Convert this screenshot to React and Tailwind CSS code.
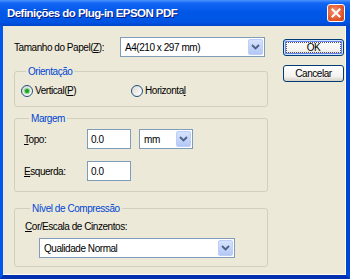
import React from "react";

const font = { fontFamily: "'Liberation Sans', Arial, sans-serif" };

function Chevron() {
  return (
    <svg width="9" height="6" viewBox="0 0 9 6">
      <path d="M1 1 L4.5 4.5 L8 1" fill="none" stroke="#4d6185" strokeWidth="1.8" />
    </svg>
  );
}

function Combo({ value, className }) {
  return (
    <div className={"flex h-[20px] items-stretch border border-[#7f9db9] bg-white p-px " + className}>
      <div className="flex flex-1 items-center pl-[3px] text-black">{value}</div>
      <div className="flex w-[15px] items-center justify-center rounded-[2px] border border-[#bccef8] bg-[linear-gradient(to_bottom,#d6e3fd,#b4c8f6)]">
        <Chevron />
      </div>
    </div>
  );
}

function Input({ value }) {
  return (
    <div className="flex h-[20px] w-[44px] items-center border border-[#7f9db9] bg-white pl-[3px]">
      {value}
    </div>
  );
}

function Radio({ checked }) {
  return (
    <div className="flex h-[12px] w-[12px] items-center justify-center rounded-full border border-[#1c5180] bg-[linear-gradient(135deg,#dcd9d0,#ffffff)]">
      {checked && <div className="h-[4px] w-[4px] rounded-full bg-[#21a121] shadow-[0_0_1px_1px_#7fcf7f]" />}
    </div>
  );
}

function Group({ title, children, className }) {
  return (
    <fieldset className={"rounded-[3px] border border-[#d0d0bf] " + className}>
      <legend className="ml-[5px] px-[2px] leading-[13px] text-[#0046d5]">{title}</legend>
      {children}
    </fieldset>
  );
}

function Button({ children, def }) {
  return (
    <div
      className={
        "flex h-[17px] w-[61px] items-center justify-center rounded-[3px] border border-[#003c74] bg-[linear-gradient(to_bottom,#ffffff,#f3f2ee_70%,#d6d0c5)] " +
        (def ? "shadow-[inset_0_0_0_1px_#cee7ff,inset_0_0_0_2px_#6982ee]" : "")
      }
    >
      {def ? (
        <span className="flex h-[11px] w-[55px] items-center justify-center border border-dotted border-[#555]">{children}</span>
      ) : (
        children
      )}
    </div>
  );
}

export default function App() {
  return (
    <div
      className="flex h-[279px] w-[350px] flex-col overflow-hidden bg-[#0054e3] text-[10px] leading-[13px] tracking-[-0.45px] text-black"
      style={font}
    >
      {/* Title bar */}
      <div className="flex h-[26px] items-center justify-between bg-[linear-gradient(to_bottom,#4a95ff_0%,#1466f5_12%,#0058e8_45%,#0054e3_85%,#0044cc_100%)] pl-[7px] pr-[5px]">
        <span className="text-[11.5px] font-bold leading-[15px] tracking-[-0.55px] text-white [text-shadow:1px_1px_#0a1883]">
          Definições do Plug-in EPSON PDF
        </span>
        <div className="flex h-[18px] w-[18px] items-center justify-center rounded-[3px] border border-white bg-[radial-gradient(circle_at_40%_40%,#f29470,#e05428_65%,#c8401a)]">
          <svg width="10" height="10" viewBox="0 0 10 10">
            <path d="M1.5 1.5 L8.5 8.5 M8.5 1.5 L1.5 8.5" stroke="#fff" strokeWidth="2" strokeLinecap="square" />
          </svg>
        </div>
      </div>
      {/* Client */}
      <div className="flex flex-1 border-b-[4px] border-l-[3px] border-r-[4px] border-b-[#0131b0] border-l-[#0058ee] border-r-[#0046d5]">
        <div className="flex flex-1 border-b border-r border-[#fffbf0] bg-[#ece9d8]">
          {/* Left column */}
          <div className="ml-[11px] flex w-[254px] flex-col pt-[11px]">
            <div className="flex h-[20px] items-center">
              <span className="w-[106px]">
                Tamanho do Papel(<u>Z</u>):
              </span>
              <Combo value="A4(210 x 297 mm)" className="w-[145px]" />
            </div>

            <Group title="Orientação" className="mt-[8px] pb-[9px] pl-[6px]">
              <div className="mt-[6px] flex h-[13px] items-center">
                <div className="flex w-[110px] items-center gap-[2px]">
                  <Radio checked />
                  <span>
                    Vertical(<u>P</u>)
                  </span>
                </div>
                <div className="flex items-center gap-[2px]">
                  <Radio />
                  <span>
                    Horizonta<u>l</u>
                  </span>
                </div>
              </div>
            </Group>

            <Group title="Margem" className="mt-[5px] pb-[10px] pl-[9px]">
              <div className="mt-[4px] flex h-[20px] items-center">
                <span className="w-[63px]">
                  <u>T</u>opo:
                </span>
                <Input value="0.0" />
                <Combo value="mm" className="ml-[8px] w-[54px]" />
              </div>
              <div className="mt-[12px] flex h-[20px] items-center">
                <span className="w-[63px]">
                  <u>E</u>squerda:
                </span>
                <Input value="0.0" />
              </div>
            </Group>

            <Group title="Nível de Compressão" className="mt-[10px] pb-[8px] pl-[10px]">
              <div className="mt-[5px]">
                <u>C</u>or/Escala de Cinzentos:
              </div>
              <Combo value="Qualidade Normal" className="ml-[14px] mt-[5px] w-[196px]" />
            </Group>
          </div>
          {/* Right column */}
          <div className="ml-[15px] flex flex-col gap-[9px] pt-[13px]">
            <Button def>OK</Button>
            <Button>Cancelar</Button>
          </div>
        </div>
      </div>
    </div>
  );
}
